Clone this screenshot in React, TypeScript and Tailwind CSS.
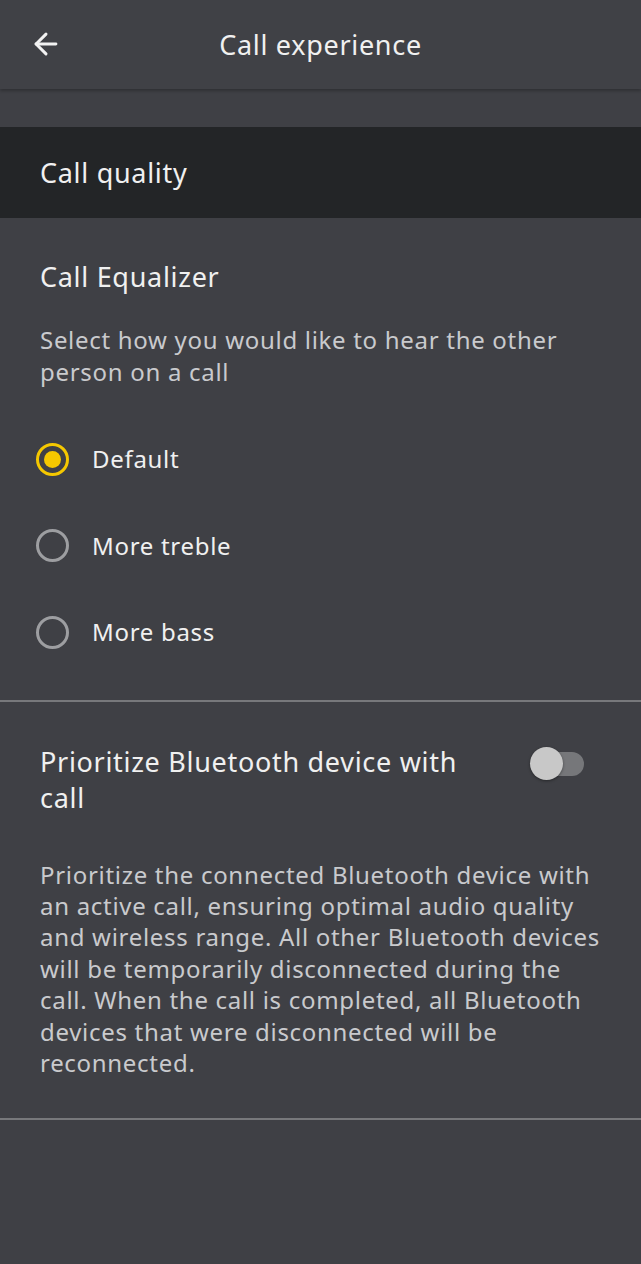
import { ArrowLeft } from 'lucide-react'

const options = ['Default', 'More treble', 'More bass']

function Radio({ checked }: { checked: boolean }) {
  if (checked) {
    return (
      <div className="w-[33px] h-[33px] rounded-full border-[3px] border-[#f5c800] flex items-center justify-center">
        <div className="w-[17px] h-[17px] rounded-full bg-[#f5c800]" />
      </div>
    )
  }
  return <div className="w-[33px] h-[33px] rounded-full border-[3px] border-[#9d9ea1]" />
}

export default function App() {
  return (
    <div className="min-h-[1264px] bg-[#3f4045] text-[#f0f0f0] tracking-[0.7px] font-['Noto_Sans',sans-serif]">
      {/* Header */}
      <div className="h-[89px] bg-[#404146] relative flex items-center justify-center shadow-[0_2px_3px_rgba(0,0,0,0.25)]">
        <ArrowLeft className="absolute left-[29px] top-[27px] w-[34px] h-[34px] text-[#f2f2f2]" strokeWidth={2.1} />
        <h1 className="text-[27px] leading-[36px]">Call experience</h1>
      </div>

      <div className="h-[38px]" />

      {/* Section band */}
      <div className="h-[91px] bg-[#232527] flex items-center px-[40px]">
        <h2 className="text-[27px] leading-[36px]">Call quality</h2>
      </div>

      {/* Equalizer */}
      <div className="px-[40px] pt-[41px]">
        <h3 className="text-[27px] leading-[36px]">Call Equalizer</h3>
        <p className="mt-[29px] text-[24px] leading-[32px] text-[#c9cacd]">
          Select how you would like to hear the other<br />person on a call
        </p>
      </div>

      <div className="pt-[28px] pb-[24px]">
        {options.map((o, i) => (
          <div key={o} className="h-[86.5px] flex items-center pl-[36px] gap-[23px]">
            <Radio checked={i === 0} />
            <span className="text-[24px] leading-[32px]">{o}</span>
          </div>
        ))}
      </div>

      <div className="h-[2px] bg-[#77787b]" />

      {/* Bluetooth priority */}
      <div className="px-[40px] pt-[42px] pb-[40px]">
        <div className="flex items-start justify-between">
          <h3 className="text-[27px] leading-[36px]">Prioritize Bluetooth device with<br />call</h3>
          <div className="relative w-[52px] h-[24px] mt-[8px] mr-[17px] rounded-full bg-[#76777a]">
            <div className="absolute -left-[2px] -top-[5px] w-[33px] h-[33px] rounded-full bg-[#c8c8c8] shadow-[0_1px_3px_rgba(0,0,0,0.4)]" />
          </div>
        </div>
        <p className="mt-[43px] whitespace-nowrap text-[24px] leading-[31.4px] text-[#c9cacd]">
          Prioritize the connected Bluetooth device with<br />
          an active call, ensuring optimal audio quality<br />
          and wireless range. All other Bluetooth devices<br />
          will be temporarily disconnected during the<br />
          call. When the call is completed, all Bluetooth<br />
          devices that were disconnected will be<br />
          reconnected.
        </p>
      </div>

      <div className="h-[2px] bg-[#77787b]" />
    </div>
  )
}
